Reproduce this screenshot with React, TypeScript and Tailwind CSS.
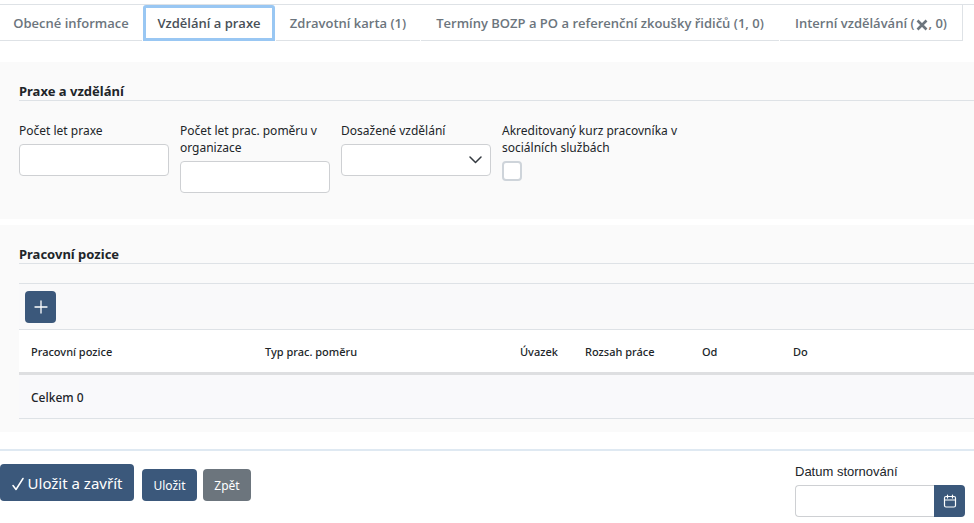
import type { ReactNode } from 'react';

const tabs: { label: ReactNode; width: string; active?: boolean }[] = [
  { label: 'Obecné informace', width: 'w-[142px]' },
  { label: 'Vzdělání a praxe', width: 'w-[132px]', active: true },
  { label: 'Zdravotní karta (1)', width: 'w-[144px]' },
  { label: 'Termíny BOZP a PO a referenční zkoušky řidičů (1, 0)', width: 'w-[358px]' },
  {
    label: (
      <>
        Interní vzdělávání (
        <svg viewBox="0 0 12 12" className="mx-px mt-0.5 h-3 w-3" aria-label="ne">
          <path d="M1.5 1.5 10.5 10.5M10.5 1.5 1.5 10.5" stroke="currentColor" strokeWidth="2.6" />
        </svg>
        , 0)
      </>
    ),
    width: 'w-[183px]',
  },
];

const columns = [
  { label: 'Pracovní pozice', width: 'w-[234px]' },
  { label: 'Typ prac. poměru', width: 'w-[255px]' },
  { label: 'Úvazek', width: 'w-[65px]' },
  { label: 'Rozsah práce', width: 'w-[117px]' },
  { label: 'Od', width: 'w-[91px]' },
  { label: 'Do', width: 'w-auto' },
];

const control = 'block h-8 w-full rounded border border-[#ced0d3] bg-white px-2 text-[13px] outline-none';

function Tabs() {
  return (
    <nav className="mt-1 border-t border-[#dee2e6] font-['Open_Sans','Noto_Sans',sans-serif]">
      <div role="tablist" className="flex h-9 gap-px">
        {tabs.map((tab, index) => (
          <button
            key={index}
            type="button"
            role="tab"
            aria-selected={!!tab.active}
            className={`${tab.width} flex shrink-0 items-center justify-center whitespace-nowrap text-[13px] font-semibold ${
              tab.active
                ? 'rounded-t-[3px] border-[3px] border-[#99c7f3] pt-px text-[#495057]'
                : 'border-b border-[#dee2e6] pt-0.5 text-[#6c757d] last:border-r'
            }`}
          >
            {tab.label}
          </button>
        ))}
      </div>
    </nav>
  );
}

function Section({ title, children }: { title: string; children: ReactNode }) {
  return (
    <section className="bg-[#fafafa] pl-[19px] pt-5">
      <h2 className="border-b border-[#dee2e6] text-[13px] leading-[18px] font-bold text-[#212529]">{title}</h2>
      {children}
    </section>
  );
}

function Field({ id, label, children }: { id: string; label: string; children: ReactNode }) {
  return (
    <div>
      <label htmlFor={id} className="mb-[5px] block text-[12px] leading-[17px]">
        {label}
      </label>
      {children}
    </div>
  );
}

export default function App() {
  return (
    <div className="overflow-hidden bg-white font-['Noto_Sans','Open_Sans',sans-serif] text-[#212529]">
      <Tabs />

      <main className="mt-[21px] flex flex-col gap-1.5">
        <Section title="Praxe a vzdělání">
          <form className="grid grid-cols-[150px_150px_150px_188px] items-start gap-[11px] pt-[21px] pb-[26px]">
            <Field id="years" label="Počet let praxe">
              <input id="years" className={control} />
            </Field>
            <Field id="yearsOrg" label="Počet let prac. poměru v organizace">
              <input id="yearsOrg" className={control} />
            </Field>
            <Field id="education" label="Dosažené vzdělání">
              <div className="relative">
                <select id="education" className={`${control} appearance-none`}>
                  <option value=""></option>
                </select>
                <svg
                  viewBox="0 0 14 14"
                  className="pointer-events-none absolute top-[9px] right-2 h-3.5 w-3.5"
                  fill="none"
                  stroke="#343a40"
                  strokeWidth="1.5"
                  strokeLinecap="round"
                  strokeLinejoin="round"
                >
                  <path d="M1 4 6.500 9.500 12 4" />
                </svg>
              </div>
            </Field>
            <Field id="course" label="Akreditovaný kurz pracovníka v sociálních službách">
              <input
                id="course"
                type="checkbox"
                className="block h-5 w-5 appearance-none rounded border-2 border-[#ced4da] bg-white checked:bg-[#3b587b]"
              />
            </Field>
          </form>
        </Section>

        <Section title="Pracovní pozice">
          <div className="mt-[19px] border-t border-[#dee2e6] bg-[#f9f9fa] px-1.5 pt-[7px] pb-1.5">
            <button
              type="button"
              aria-label="Přidat"
              className="flex h-8 w-[31px] items-center justify-center rounded bg-[#3b587b] text-white"
            >
              <svg viewBox="0 0 14 14" className="h-3.5 w-3.5" stroke="currentColor" strokeWidth="1.3" strokeLinecap="round">
                <path d="M7 1v12M1 7h12" />
              </svg>
            </button>
          </div>
          <table className="w-full table-fixed border-collapse text-left">
            <thead>
              <tr className="h-11 border-t border-b-[3px] border-t-[#dee2e6] border-b-[#dedfe1] bg-white">
                {columns.map((column) => (
                  <th key={column.label} scope="col" className={`${column.width} px-3 pt-0.5 text-[11px] font-medium whitespace-nowrap`}>
                    {column.label}
                  </th>
                ))}
              </tr>
            </thead>
            <tfoot>
              <tr className="h-[45px] border-b border-[#dee2e6] bg-[#f9f9fb]">
                <td colSpan={6} className="px-3 pt-0.5 text-[12px] font-medium">
                  Celkem 0
                </td>
              </tr>
            </tfoot>
          </table>
          <div className="h-[13px]" />
        </Section>
      </main>

      <footer className="mt-[17px] flex items-start justify-between border-t-2 border-[#dfe9f2] pt-[13px] pr-[9px]">
        <div className="flex items-end">
          <button type="button" className="flex h-[37px] w-[134px] items-center justify-center gap-1 rounded bg-[#3b587b] pt-0.5 text-[15px] text-white">
            <svg viewBox="0 0 12 14" className="h-3.5 w-3" fill="none" stroke="currentColor" strokeWidth="1.5" strokeLinecap="round" strokeLinejoin="round">
              <path d="m1 8.500 3 4L11 1.500" />
            </svg>
            Uložit a zavřít
          </button>
          <button type="button" className="ml-2 h-8 w-[55px] rounded bg-[#3b587b] pt-0.5 text-[12px] text-white">
            Uložit
          </button>
          <button type="button" className="ml-1.5 h-8 w-12 rounded bg-[#6c757d] pt-0.5 text-[12px] text-white">
            Zpět
          </button>
        </div>
        <div className="w-[170px]">
          <label htmlFor="cancelDate" className="mb-[5px] block font-['Liberation_Sans',Arial,sans-serif] text-[13px] leading-4">
            Datum stornování
          </label>
          <div className="flex">
            <input
              id="cancelDate"
              className="h-8 min-w-0 flex-1 rounded-l border border-r-0 border-[#ced0d3] bg-white px-2 text-[13px] outline-none"
            />
            <button
              type="button"
              aria-label="Vybrat datum"
              className="flex h-8 w-[31px] items-center justify-center rounded-r bg-[#3b587b] text-white"
            >
              <svg viewBox="0 0 14 14" className="h-3.5 w-3.5" fill="none" stroke="currentColor" strokeWidth="1.2" strokeLinecap="round">
                <rect x="1.500" y="2.500" width="11" height="10.500" rx="1.500" />
                <path d="M1.500 6h11M4.500 1v3M9.500 1v3" />
              </svg>
            </button>
          </div>
        </div>
      </footer>
    </div>
  );
}
